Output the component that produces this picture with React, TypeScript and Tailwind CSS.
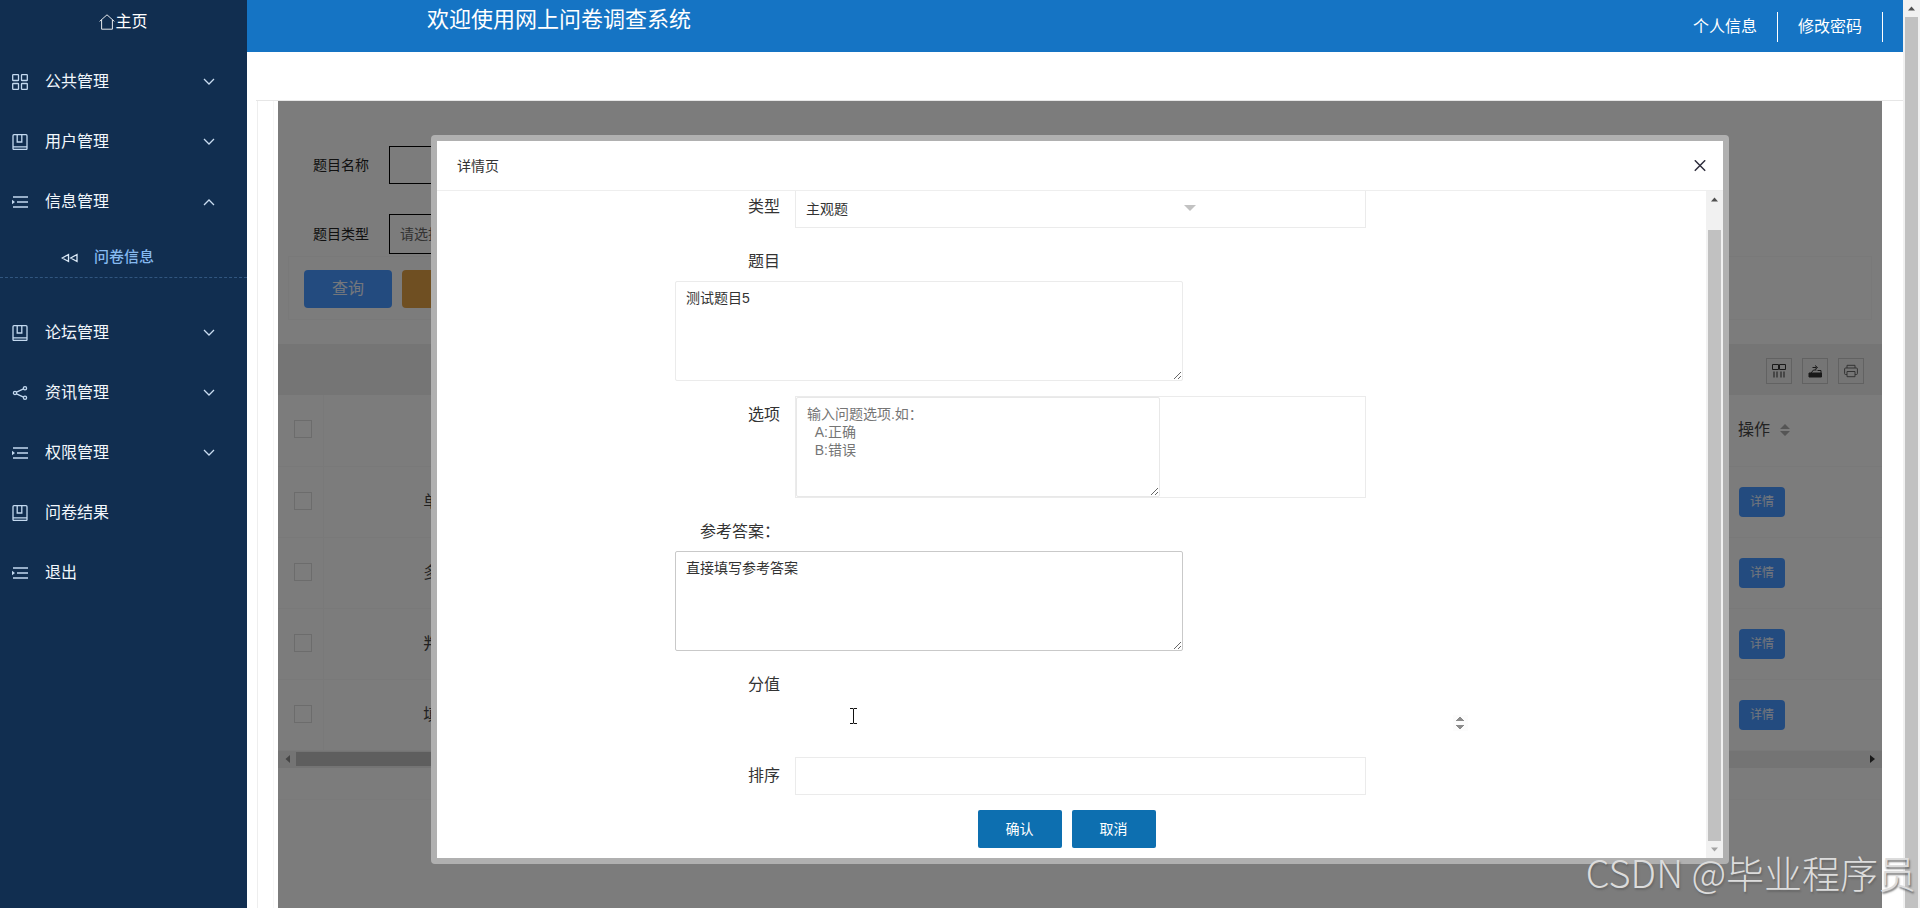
import { type ReactNode } from 'react';

const navTop = [
  { name: '公共管理', icon: 'grid', open: false, children: [] as string[] },
  { name: '用户管理', icon: 'book', open: false, children: [] },
  { name: '信息管理', icon: 'list', open: true, children: ['问卷信息'] },
  { name: '论坛管理', icon: 'book', open: false, children: [] },
  { name: '资讯管理', icon: 'share', open: false, children: [] },
  { name: '权限管理', icon: 'list', open: false, children: [] },
  { name: '问卷结果', icon: 'book', leaf: true, open: false, children: [] },
  { name: '退出', icon: 'list', leaf: true, open: false, children: [] },
];

const rows = ['单选题', '多选题', '判断题', '填空题'];

const iconPaths: Record<string, ReactNode> = {
  grid: (
    <>
      <rect x="0.7" y="0.7" width="5.8" height="5.8" rx="0.6" />
      <rect x="9.5" y="0.7" width="5.8" height="5.8" rx="0.6" />
      <rect x="0.7" y="9.5" width="5.8" height="5.8" rx="0.6" />
      <rect x="9.5" y="9.5" width="5.8" height="5.8" rx="0.6" />
    </>
  ),
  book: (
    <>
      <rect x="1" y="0.7" width="14" height="14.800" rx="1" />
      <path d="M1 12.8h14M5.200 0.7v7.300h4.600V0.7" />
    </>
  ),
  list: (
    <>
      <path d="M1 3h15M5 8h11M1 13h15" />
      <path d="M0 5.8v4.4L3 8z" fill="currentColor" stroke="none" />
    </>
  ),
  share: (
    <>
      <circle cx="3" cy="8" r="1.6" />
      <circle cx="13" cy="3.2" r="1.6" />
      <circle cx="13" cy="12.8" r="1.6" />
      <path d="M4.5 7.2l7-3.3M4.5 8.8l7 3.3" />
    </>
  ),
};

function NavIcon({ name }: { name: string }) {
  return (
    <svg className="h-4 w-4 shrink-0 text-[#c3d9f0]" viewBox="0 0 16 16" fill="none" stroke="currentColor" strokeWidth="1.3">
      {iconPaths[name]}
    </svg>
  );
}

function Chevron({ up }: { up: boolean }) {
  return (
    <svg className="h-3 w-3 text-[#c9dcf0]" viewBox="0 0 12 12" fill="none" stroke="currentColor" strokeWidth="1.3">
      <path d={up ? 'M1 9l5-5 5 5' : 'M1 3l5 5 5-5'} />
    </svg>
  );
}

function Sidebar() {
  return (
    <aside className="w-[247px] shrink-0 bg-[#112e50]">
      <a href="#home" className="flex h-[52px] items-start justify-center pt-[10px] text-base leading-6 text-white">
        <svg className="mt-1 h-4 w-4" viewBox="0 0 16 16" fill="none" stroke="currentColor" strokeWidth="0.9">
          <path d="M0.6 7.4L8 0.8l7.4 6.6M2.6 5.8v9.4h10.8V5.8" />
        </svg>
        主页
      </a>
      <nav>
        {navTop.map((item) => (
          <div key={item.name}>
            <a href="#nav" className="flex h-[60px] items-center gap-[17px] pr-8 pl-3 text-base text-[#f2f7fc]">
              <NavIcon name={item.icon} />
              <span className="flex-1">{item.name}</span>
              {!item.leaf && <Chevron up={item.open} />}
            </a>
            {item.children.map((child) => (
              <div key={child} className="h-[71px]">
                <a href="#sub" className="flex h-[46px] items-center gap-4 border-b border-dashed border-[#31567f] pt-[6px] pl-[61px] text-[15px] font-medium text-[#86b9ef]">
                  <svg className="h-4 w-[17px] text-[#dbe9f7]" viewBox="0 0 17 16" fill="none" stroke="currentColor" strokeWidth="1.3">
                    <path d="M7.5 4.5v7L1.2 8zM16 4.5v7L9.700 8z" />
                  </svg>
                  {child}
                </a>
              </div>
            ))}
          </div>
        ))}
      </nav>
    </aside>
  );
}

function Header() {
  return (
    <header className="flex h-[52px] items-center justify-between bg-[#1574c4] text-white">
      <h1 className="ml-[180px] self-start text-[22px] leading-10">欢迎使用网上问卷调查系统</h1>
      <div className="mt-[2px] mr-5 flex items-center text-base leading-[30px]">
        <a href="#profile" className="border-r border-white px-5">个人信息</a>
        <a href="#password" className="border-r border-white px-5">修改密码</a>
      </div>
    </header>
  );
}

function SearchForm() {
  return (
    <form className="px-[10px] pt-[45px] text-sm">
      <div className="flex h-[38px] items-center pl-[25px]">
        <label htmlFor="qname" className="w-[76px] text-[#222]">题目名称</label>
        <input id="qname" className="h-full w-[190px] border border-black px-[10px]" />
      </div>
      <div className="mt-[30px] flex h-10 items-center pl-[25px]">
        <label htmlFor="qtype" className="w-[76px] text-[#222]">题目类型</label>
        <select id="qtype" className="h-full w-[190px] appearance-none border border-black px-[10px] text-[#666]">
          <option>请选择</option>
        </select>
      </div>
      <div className="mt-[2px] flex h-16 gap-[10px] border border-[#f3f3f3] px-[15px] pt-[13px] text-base">
        <button type="button" className="h-[38px] w-[88px] rounded-sm bg-[#4696ff] text-[#e8eef8]">查询</button>
        <button type="button" aria-label="新增" className="h-[38px] w-[88px] rounded-sm bg-[#de9e44]" />
      </div>
    </form>
  );
}

function ToolButton({ label, children }: { label: string; children: ReactNode }) {
  return (
    <button type="button" aria-label={label} className="flex h-[26px] w-[26px] items-center justify-center border border-[#c4c4c4]">
      <svg className="h-4 w-4 text-[#333]" viewBox="0 0 16 16" fill="none" stroke="currentColor" strokeWidth="1">
        {children}
      </svg>
    </button>
  );
}

function QuestionTable() {
  return (
    <div className="mt-6">
      <div className="flex h-[51px] items-center justify-end gap-[10px] bg-[#ebebeb] pt-[2px] pr-[18px]">
        <ToolButton label="筛选列">
          <path d="M1.500 1.500h6v5h-6zM8.500 1.500h6v5h-6zM3 8.500v6M6 8.500v6M10 8.500v6M13 8.500v6" />
        </ToolButton>
        <ToolButton label="导出">
          <path d="M2 10h12.500v4H2z" fill="currentColor" />
          <path d="M4 10L6.500 7h3M5.500 4.500h4M8 2.500L10.500 4.500 8 6.500M10.500 7.500h3.500V10" />
        </ToolButton>
        <ToolButton label="打印">
          <path d="M4 5V2.300h8V5M4 11.500H2.500Q1.600 11.500 1.600 10.500V6Q1.600 5 2.600 5h10.800Q14.400 5 14.400 6v4.500q0 1-1 1H12M4 8.500h8v5.200H4z" stroke="#666" />
        </ToolButton>
      </div>
      <table className="w-full table-fixed border-collapse text-base text-[#444]">
        <colgroup>
          <col className="w-[45px]" />
          <col className="w-[248px]" />
          <col />
          <col className="w-[159px]" />
        </colgroup>
        <thead>
          <tr className="h-[71px] border-b border-[#f2f2f2]">
            <th className="border-r border-[#f3f3f3] pb-[2px] pl-[6px]">
              <input type="checkbox" aria-label="全选" className="mx-auto block h-[18px] w-[18px] appearance-none border border-[#d8d8d8]" />
            </th>
            <th />
            <th />
            <th className="pl-[15px] text-left font-normal">
              <span className="flex items-center gap-[10px]">
                操作
                <svg className="h-3 w-[10px]" viewBox="0 0 10 12" fill="#aaa">
                  <path d="M5 0l5 5H0zM5 12l5-5H0z" />
                </svg>
              </span>
            </th>
          </tr>
        </thead>
        <tbody>
          {rows.map((type) => (
            <tr key={type} className="h-[71px] border-b border-[#f2f2f2]">
              <td className="border-r border-[#f3f3f3] pb-[2px] pl-[6px]">
                <input type="checkbox" aria-label={type} className="mx-auto block h-[18px] w-[18px] appearance-none border border-[#d8d8d8]" />
              </td>
              <td className="text-center">{type}</td>
              <td />
              <td className="pl-4">
                <button type="button" className="h-[30px] w-[46px] rounded-sm bg-[#4696ff] text-xs text-[#e8eef8]">详情</button>
              </td>
            </tr>
          ))}
        </tbody>
      </table>
      {/* horizontal scroll track */}
      <div className="flex h-[17px] items-center bg-[#e8e8e8] px-[2px]">
        <svg className="h-[14px] w-4" viewBox="0 0 16 14" fill="#8a8a8a"><path d="M10 3v8L5.500 7z" /></svg>
        <div className="h-[14px] w-[70%] bg-[#bdbdbd]" />
        <svg className="ml-auto h-[14px] w-4" viewBox="0 0 16 14" fill="#333"><path d="M6 3v8l5-4z" /></svg>
      </div>
      <div className="h-8 border-b border-[#f4f4f4]" />
    </div>
  );
}

function FormLabel({ htmlFor, children }: { htmlFor: string; children: ReactNode }) {
  return (
    <label htmlFor={htmlFor} className="block h-[38px] w-[120px] shrink-0 pr-[15px] text-right text-base leading-[38px] whitespace-nowrap">
      {children}
    </label>
  );
}

const textareaClass = 'block h-[100px] resize rounded-xs border px-[10px] py-[7px] leading-[18px]';

function ScrollArrow({ up, fill }: { up?: boolean; fill: string }) {
  return (
    <svg className="mx-auto h-[17px] w-[17px] shrink-0" viewBox="0 0 17 17" fill={fill}>
      <path d={up ? 'M5 10.500h7L8.500 6.500z' : 'M5 6.500h7L8.500 10.500z'} />
    </svg>
  );
}

function DetailDialog() {
  return (
    <div role="dialog" aria-label="详情页" className="absolute inset-x-[153px] top-[34px] rounded-sm bg-[#b0b0b0] p-[6px]">
      <div className="bg-white text-sm text-[#333]">
        <div className="flex h-[50px] items-center justify-between border-b border-[#eee] pr-[17px] pl-5">
          <h2>详情页</h2>
          <button type="button" aria-label="关闭">
            <svg className="h-3 w-3" viewBox="0 0 12 12" fill="none" stroke="#2e2d3c" strokeWidth="1.5">
              <path d="M0.800 0.300l10.400 10.400M11.200 0.300L0.800 10.700" />
            </svg>
          </button>
        </div>
        <div className="flex">
          <div className="flex-1">
            <form className="mx-auto flex w-[62.5%] flex-col gap-[15px] pb-[10px]">
              <div className="flex">
                <div className="-mt-[3px]"><FormLabel htmlFor="type">类型</FormLabel></div>
                <div className="h-[37px] w-[72%] border border-t-0 border-[#ebebeb]">
                  <div className="relative w-[71%]">
                    <select id="type" className="h-9 w-full appearance-none px-[10px]">
                      <option>主观题</option>
                    </select>
                    <svg className="pointer-events-none absolute top-[14px] right-1 h-[6px] w-3" viewBox="0 0 12 6" fill="#c2c2c2">
                      <path d="M0 0h12L6 6z" />
                    </svg>
                  </div>
                </div>
              </div>
              <div>
                <FormLabel htmlFor="title">题目</FormLabel>
                <textarea id="title" defaultValue="测试题目5" className={`${textareaClass} w-[64%] border-[#ebebeb]`} />
              </div>
              <div className="flex">
                <FormLabel htmlFor="options">选项</FormLabel>
                <div className="w-[72%] border border-[#ebebeb]">
                  <textarea
                    id="options"
                    placeholder={'输入问题选项.如：\n  A:正确\n  B:错误'}
                    className={`${textareaClass} w-[64%] border-[#e8e8e8] placeholder:text-[#757575]`}
                  />
                </div>
              </div>
              <div>
                <FormLabel htmlFor="answer">参考答案：</FormLabel>
                <textarea id="answer" defaultValue="直接填写参考答案" className={`${textareaClass} w-[64%] border-[#c9c9c9]`} />
              </div>
              <div className="relative">
                <FormLabel htmlFor="score">分值</FormLabel>
                <input
                  id="score"
                  type="number"
                  className="block h-[38px] w-full pl-[130px] [&::-webkit-inner-spin-button]:opacity-100"
                />
                {/* text cursor resting over the score field */}
                <svg className="pointer-events-none absolute top-[42px] left-[174px] h-4 w-[9px]" viewBox="0 0 9 16" fill="none" stroke="#111" strokeWidth="1">
                  <path d="M1 0.500h3M5 0.500h3M4.500 0.500v15M1 15.500h3M5 15.500h3" />
                </svg>
              </div>
              <div className="flex">
                <FormLabel htmlFor="sort">排序</FormLabel>
                <input id="sort" className="h-[38px] w-[72%] border border-[#ebebeb] px-[10px]" />
              </div>
              <div className="flex justify-center gap-[10px] pr-[10px] text-white">
                <button type="submit" className="h-[38px] w-[84px] rounded-xs bg-[#0d6fb0]">确认</button>
                <button type="button" className="h-[38px] w-[84px] rounded-xs bg-[#0d6fb0]">取消</button>
              </div>
            </form>
          </div>
          <div className="flex w-[17px] flex-col bg-[#f1f1f1]">
            <ScrollArrow up fill="#505050" />
            <div className="mx-auto mt-[22px] w-[13px] flex-1 bg-[#c1c1c1]" />
            <ScrollArrow fill="#a3a3a3" />
          </div>
        </div>
      </div>
    </div>
  );
}

export default function App() {
  return (
    <div className="relative flex h-screen overflow-hidden bg-white font-['Liberation_Sans','Noto_Sans_CJK_SC',sans-serif] text-black">
      <Sidebar />
      <div className="flex min-w-0 flex-1 flex-col">
        <Header />
        <main className="mt-12 ml-[9px] flex flex-1 border-t border-[#e6e6e6]">
          <div className="ml-px flex flex-1 border-l border-[#eee] pr-[21px] pl-[15px]">
            <div className="flex flex-1 border-l border-[#f6f6f6] pl-1">
              <div className="relative flex-1 bg-[#f8f8f8]">
                <SearchForm />
                <QuestionTable />
                <div className="absolute inset-0 bg-black/50" />
                <DetailDialog />
              </div>
            </div>
          </div>
        </main>
      </div>
      {/* page scrollbar */}
      <div className="flex w-[17px] shrink-0 flex-col bg-[#f1f1f1]">
        <ScrollArrow up fill="#505050" />
        <div className="mx-auto w-[13px] flex-1 bg-[#c1c1c1]" />
      </div>
      <p className="pointer-events-none absolute right-1 bottom-3 text-[38px] leading-[48px] font-light text-[#dcdcdc] font-['Noto_Sans_CJK_SC',sans-serif] [text-shadow:1px_2px_2px_#666]">
        CSDN @毕业程序员
      </p>
    </div>
  );
}
